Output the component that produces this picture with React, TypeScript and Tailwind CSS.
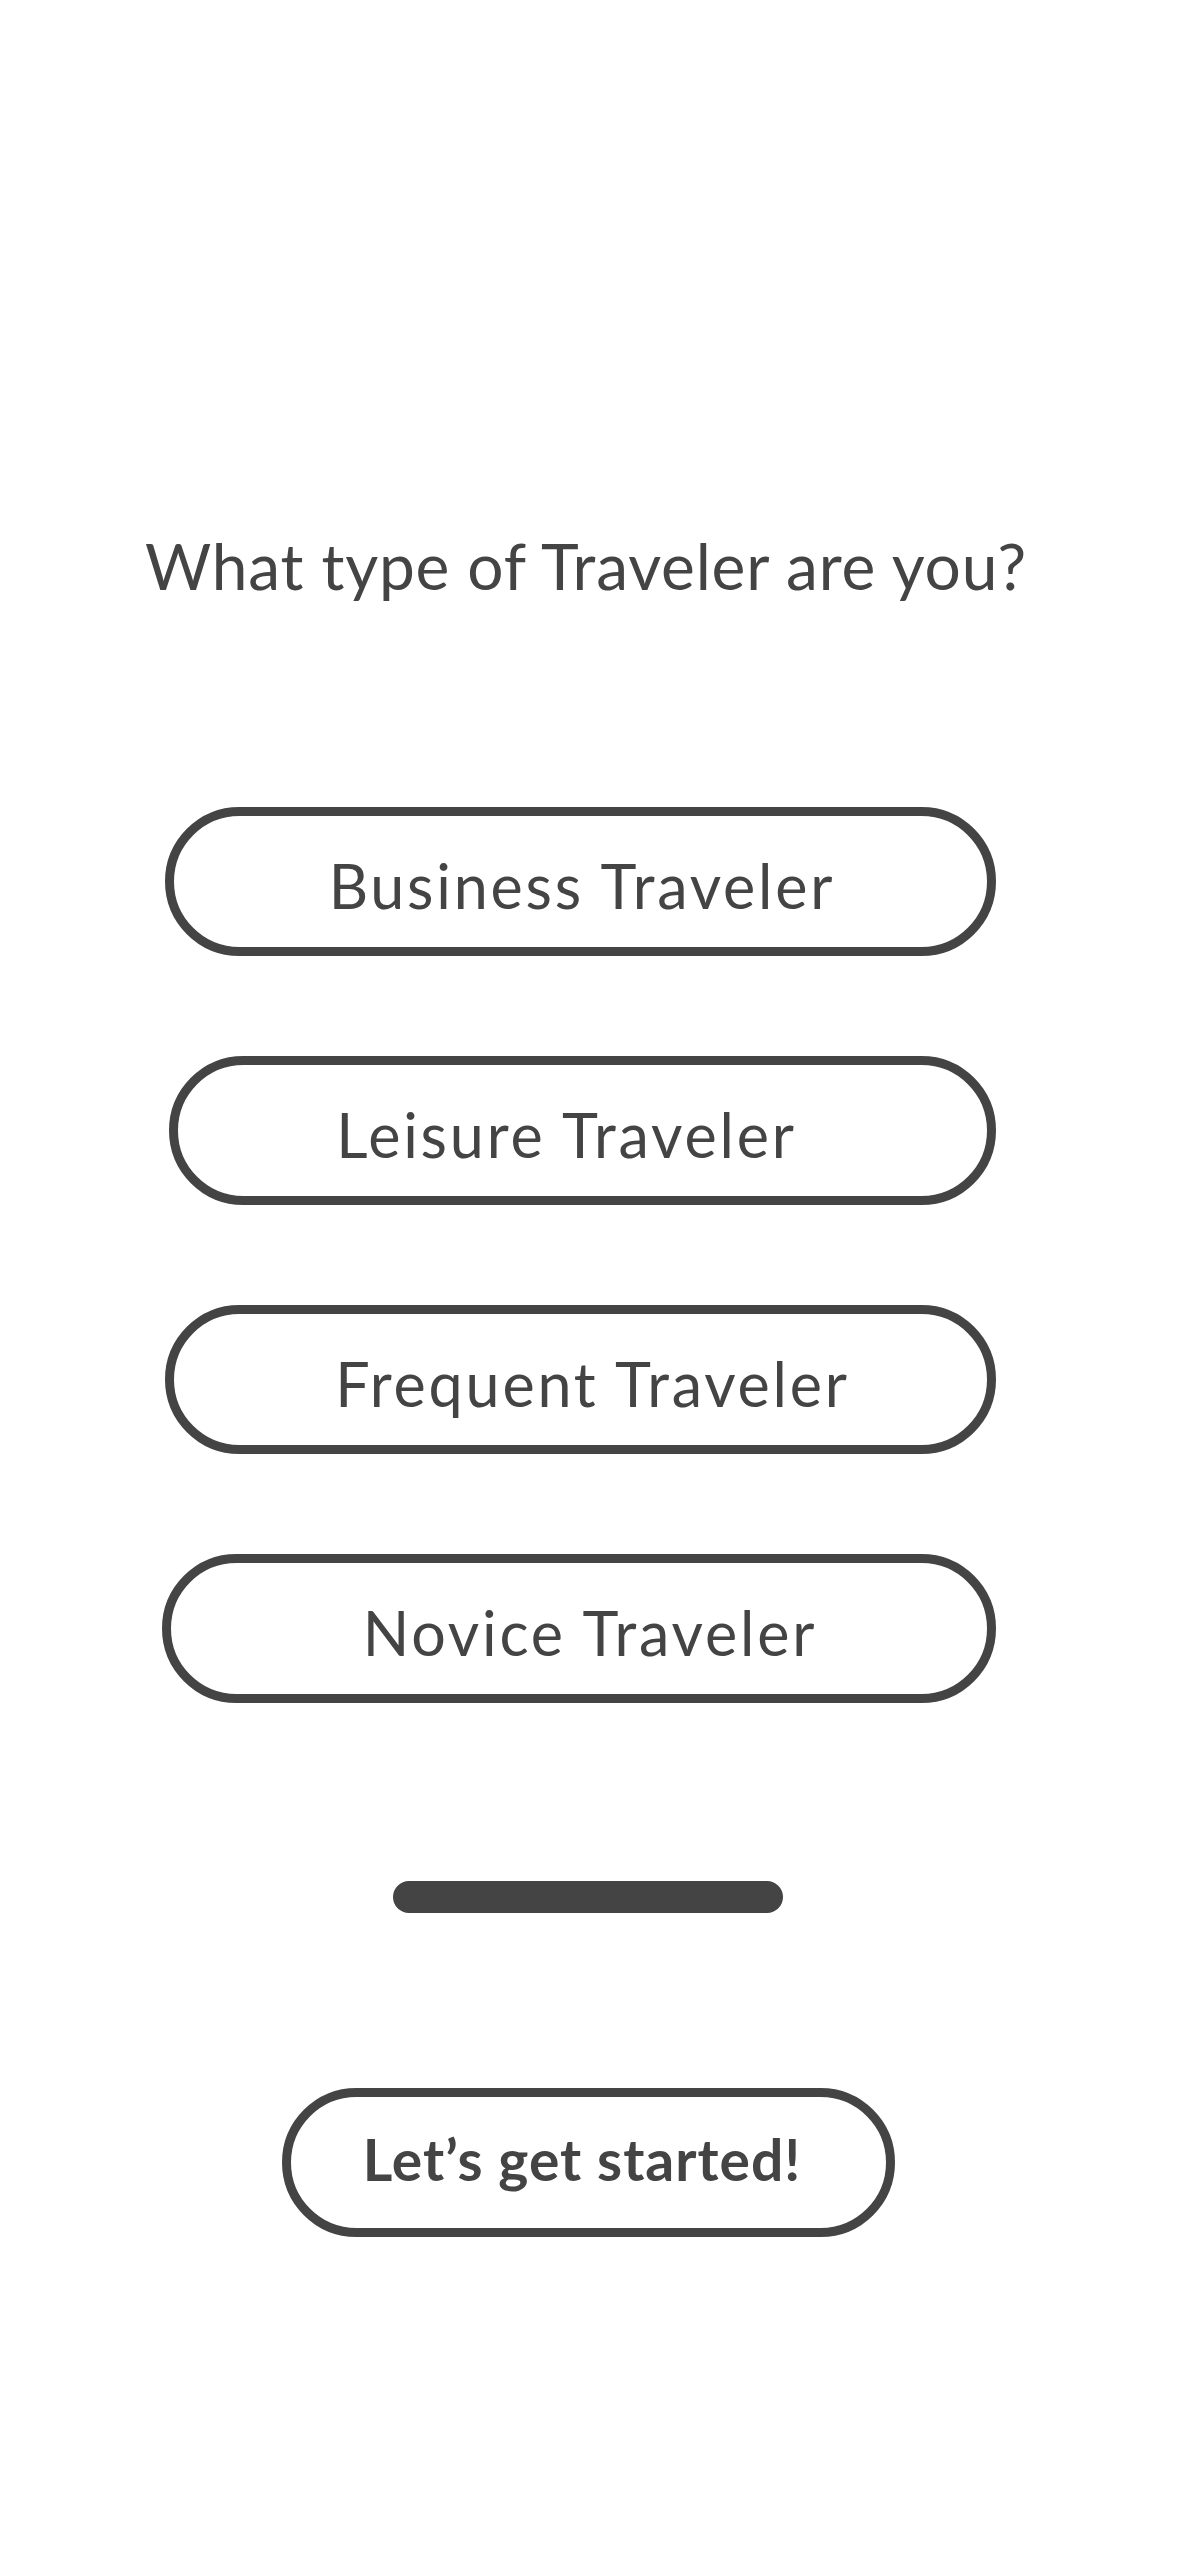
const OPTIONS = [
  { label: "Business Traveler", box: "ml-[165px]", text: "pl-[3px]" },
  { label: "Leisure Traveler", box: "ml-[169px]", text: "pr-[32px]" },
  { label: "Frequent Traveler", box: "ml-[165px]", text: "pl-[24px]" },
  { label: "Novice Traveler", box: "ml-[162px]", text: "pl-[22px]" },
];

export default function App() {
  return (
    <div className="flex min-h-[2556px] w-full flex-col bg-white text-[#444444]">
      {/* Question */}
      <h1 className="mt-[534px] pr-[7px] text-center font-['Lato',sans-serif] text-[64px] font-normal leading-none tracking-[0.8px]">
        What type of Traveler are you?
      </h1>

      {/* Options */}
      <div className="mt-[209px] flex flex-col gap-[100px]">
        {OPTIONS.map((o) => (
          <button
            key={o.label}
            className={`${o.box} mr-[183px] flex h-[149px] items-center justify-center rounded-full border-[9px] border-[#444444] bg-white`}
          >
            <span className={`${o.text} pt-[7px] font-['Lato',sans-serif] text-[61px] leading-none tracking-[2.8px]`}>
              {o.label}
            </span>
          </button>
        ))}
      </div>

      {/* Divider pill */}
      <div className="mt-[178px] ml-[393px] h-[32px] w-[390px] rounded-full bg-[#444444]" />

      {/* CTA */}
      <button className="mt-[175px] ml-[282px] flex h-[149px] w-[613px] items-center justify-center rounded-full border-[9px] border-[#444444] bg-white">
        <span className="pr-[13px] pb-[7px] font-['Lato',sans-serif] text-[57px] font-bold leading-none tracking-[1px]">
          Let’s get started!
        </span>
      </button>
    </div>
  );
}
